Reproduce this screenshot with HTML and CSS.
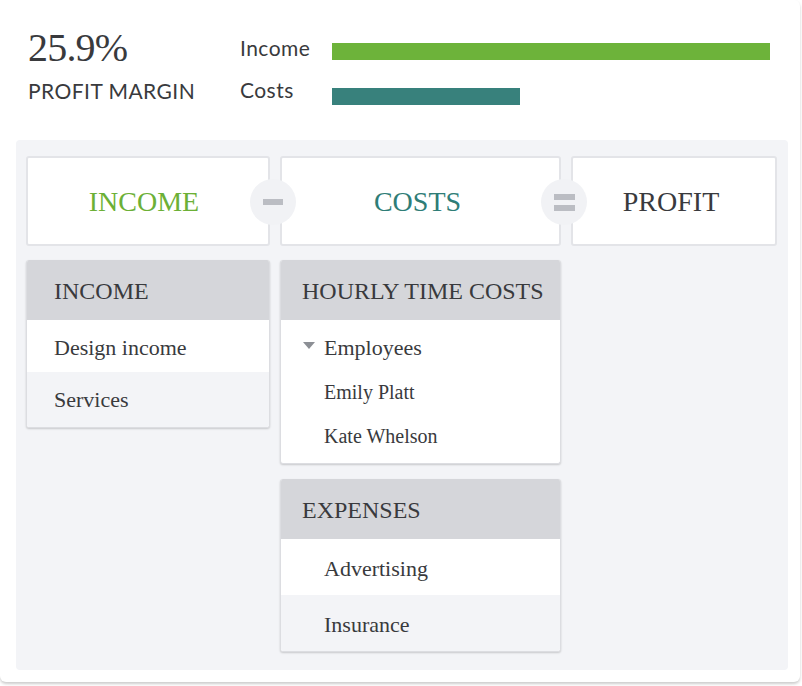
FILE: index.html
```html
<!DOCTYPE html>
<html>
<head>
<meta charset="utf-8">
<link rel="stylesheet" href="styles.css">
</head>
<body>
<div class="card">
  <div class="summary">
    <div class="big-num">25.9%</div>
    <div class="bar-label label-income">Income</div>
    <div class="bar-track track-income"><div class="bar bar-income" style="width:100%"></div></div>
    <div class="margin-label">PROFIT MARGIN</div>
    <div class="bar-label label-costs">Costs</div>
    <div class="bar-track track-costs"><div class="bar bar-costs" style="width:42.9%"></div></div>
  </div>
  <div class="panel">
    <div class="eq-card eq-income">INCOME</div>
    <div class="eq-card eq-costs">
      <span class="op op-minus"><span class="op-bar"></span></span>
      COSTS
    </div>
    <div class="eq-card eq-profit">
      <span class="op op-equals"><span class="op-bar"></span><span class="op-bar"></span></span>
      PROFIT
    </div>

    <div class="col">
      <div class="list">
        <div class="list-head head-wide">INCOME</div>
        <div class="row row-short">Design income</div>
        <div class="row row-short row-alt row-last">Services</div>
      </div>
    </div>

    <div class="col">
      <div class="list">
        <div class="list-head">HOURLY TIME COSTS</div>
        <div class="tree">
          <div class="tree-row tree-parent"><span class="caret"></span>Employees</div>
          <div class="tree-row tree-child">Emily Platt</div>
          <div class="tree-row tree-child">Kate Whelson</div>
        </div>
      </div>
      <div class="list">
        <div class="list-head">EXPENSES</div>
        <div class="row row-tall">Advertising</div>
        <div class="row row-tall row-alt">Insurance</div>
      </div>
    </div>

    <div class="col"></div>
  </div>
</div>
</body>
</html>
```

FILE: styles.css
```css
html, body {
  margin: 0;
  padding: 0;
  background: #ffffff;
}

body {
  width: 802px;
  height: 686px;
  overflow: hidden;
  color: #393a3d;
}

.card {
  box-sizing: border-box;
  width: 800px;
  height: 682px;
  background: #ffffff;
  border-radius: 0 6px 6px 6px;
  box-shadow: 0 2px 3px rgba(0, 0, 0, 0.2);
  padding: 0 12px 12px 16px;
  display: flex;
  flex-direction: column;
}

/* ---------- summary ---------- */
.summary {
  display: grid;
  grid-template-columns: 212px 92px 1fr;
  grid-template-rows: 52px 27px;
  padding: 26px 18px 35px 12px;
}

.big-num {
  font-family: "Liberation Serif", Tinos, "DejaVu Serif", serif;
  font-size: 40px;
  line-height: 44px;
  letter-spacing: -0.8px;
  color: #393a3d;
}

.margin-label,
.bar-label {
  font-family: Lato, sans-serif;
  font-size: 21px;
  line-height: 24px;
  letter-spacing: 0.45px;
  color: #393a3d;
}

.margin-label {
  margin-top: 1px;
}

.label-income {
  margin-top: 10px;
}

.bar-track {
  height: 17px;
}

.track-income {
  margin-top: 17px;
}

.track-costs {
  margin-top: 10px;
}

.bar {
  height: 100%;
}

.bar-income {
  background: #6db33a;
}

.bar-costs {
  background: #38817c;
}

/* ---------- panel ---------- */
.panel {
  flex: 1;
  background: #f3f4f7;
  border-radius: 4px;
  padding: 16px 11px 17px 10px;
  display: grid;
  grid-template-columns: 244px 281px 1fr;
  grid-template-rows: 90px 1fr;
  column-gap: 10px;
  row-gap: 14px;
}

.eq-card {
  position: relative;
  box-sizing: border-box;
  background: #ffffff;
  border: 2px solid #e3e4e8;
  border-radius: 3px;
  display: flex;
  align-items: center;
  justify-content: center;
  font-family: "Liberation Serif", Tinos, "DejaVu Serif", serif;
  font-size: 28px;
  padding: 2px 6px 0 0;
}

.eq-income {
  color: #6cb036;
  padding-right: 8px;
}

.eq-costs {
  color: #2f7d77;
}

.eq-profit {
  color: #393a3d;
}

.op {
  position: absolute;
  left: -32px;
  top: 50%;
  width: 46px;
  height: 46px;
  margin-top: -22px;
  border-radius: 50%;
  background: #f1f2f5;
  display: flex;
  flex-direction: column;
  align-items: center;
  justify-content: center;
  gap: 5px;
}

.op-bar {
  display: block;
  width: 20px;
  height: 6px;
  background: #bbbdc3;
}

.op-equals .op-bar {
  width: 21px;
}

/* ---------- lists ---------- */
.col {
  display: flex;
  flex-direction: column;
  gap: 15px;
  align-items: stretch;
}

.list {
  box-sizing: border-box;
  background: #ffffff;
  border: 1px solid #dcdde1;
  border-top: 0;
  border-radius: 3px;
  box-shadow: 0 1px 2px rgba(0, 0, 0, 0.18);
  overflow: hidden;
  font-family: "Liberation Serif", Tinos, "DejaVu Serif", serif;
}

.list-head {
  height: 60px;
  box-sizing: border-box;
  background: #d5d6da;
  margin: 0 -1px;
  padding: 2px 0 0 22px;
  display: flex;
  align-items: center;
  font-size: 24px;
  color: #393a3d;
}

.list-head.head-wide {
  padding-left: 28px;
}

.row {
  font-size: 22px;
  line-height: 26px;
  padding-left: 27px;
  color: #393a3d;
}

.row-short {
  padding-top: 15px;
  padding-bottom: 11px;
}

.row-short.row-last {
  padding-bottom: 14px;
}

.row-tall {
  padding-left: 43px;
  padding-top: 17px;
  padding-bottom: 13px;
}

.row-alt {
  background: #f3f4f7;
}

.tree {
  padding: 6px 0 5px;
}

.tree-row {
  height: 44px;
  display: flex;
  align-items: center;
  color: #393a3d;
}

.tree-parent {
  font-size: 22px;
  padding-left: 22px;
}

.tree-child {
  font-size: 20px;
  padding-left: 43px;
}

.caret {
  width: 0;
  height: 0;
  border-left: 6px solid transparent;
  border-right: 6px solid transparent;
  border-top: 7px solid #8c8f95;
  margin-right: 9px;
  margin-top: -5px;
}
```
